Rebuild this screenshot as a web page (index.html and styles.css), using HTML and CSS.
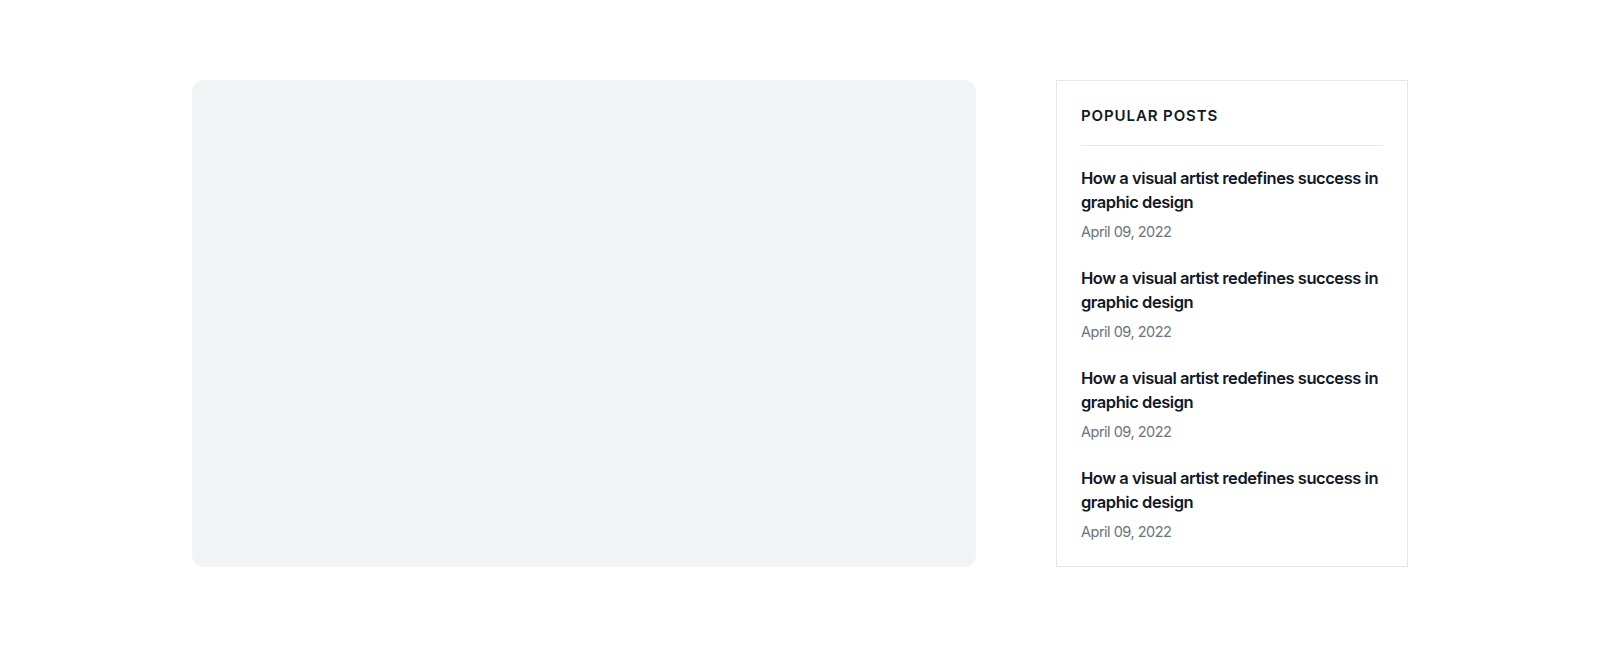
FILE: index.html
```html
<!DOCTYPE html>
<html lang="en">
<head>
    <meta charset="UTF-8">
    <title>Blog</title>
    <meta name="viewport" content="width=device-width, initial-scale=1.0">
    <link rel="stylesheet" href="styles.css">
</head>
<body>
    <div class="container">
        <div class="feature"></div>

        <aside class="widget">
            <h4 class="widget__title">Popular Posts</h4>

            <ul class="posts">
                <li class="post">
                    <a class="post__title" href="#">How a visual artist redefines success in graphic design</a>
                    <span class="post__date">April 09, 2022</span>
                </li>
                <li class="post">
                    <a class="post__title" href="#">How a visual artist redefines success in graphic design</a>
                    <span class="post__date">April 09, 2022</span>
                </li>
                <li class="post">
                    <a class="post__title" href="#">How a visual artist redefines success in graphic design</a>
                    <span class="post__date">April 09, 2022</span>
                </li>
                <li class="post">
                    <a class="post__title" href="#">How a visual artist redefines success in graphic design</a>
                    <span class="post__date">April 09, 2022</span>
                </li>
            </ul>
        </aside>
    </div>
</body>
</html>
```

FILE: styles.css
```css
body {
    margin: 0;
    background: #fff;
    color: #111827;
    font-family: Inter, "Noto Sans", sans-serif;
}

.container {
    display: grid;
    grid-template-columns: 784px 352px;
    column-gap: 80px;
    justify-content: center;
    padding-top: 80px;
}

.feature {
    background: #f2f3f5;
    border-radius: 12px;
}

.widget {
    border: 1px solid #e5e7eb;
    padding: 23px 24px 22px;
}

.widget__title {
    margin: 0;
    padding-bottom: 17px;
    border-bottom: 1px solid #e5e7eb;
    font-size: 15px;
    line-height: 24px;
    font-weight: 600;
    letter-spacing: 0.9px;
    text-transform: uppercase;
}

.posts {
    list-style: none;
    margin: 0;
    padding: 20px 0 0;
    display: flex;
    flex-direction: column;
    gap: 22px;
}

.post {
    display: flex;
    flex-direction: column;
    gap: 6px;
}

.post__title {
    color: #111827;
    text-decoration: none;
    font-size: 16.5px;
    line-height: 24px;
    font-weight: 600;
    letter-spacing: -0.45px;
}

.post__date {
    color: #6b7280;
    font-size: 14.5px;
    line-height: 24px;
    letter-spacing: -0.5px;
}
```
